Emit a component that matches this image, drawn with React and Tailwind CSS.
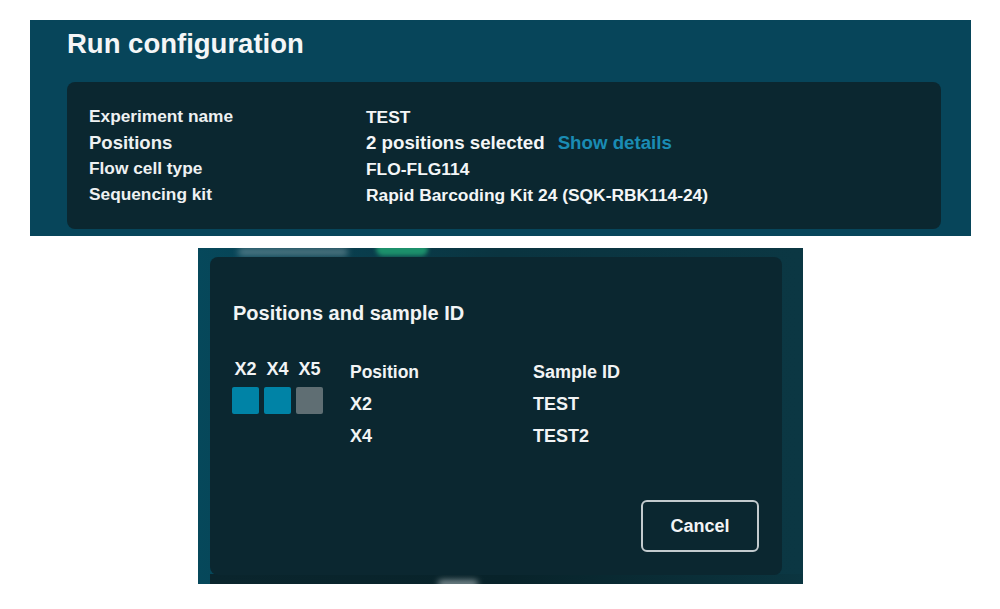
export default function App() {
  const font = { fontFamily: '"Liberation Sans", Arial, sans-serif' };
  const rows = [
    ["Experiment name", "TEST", false],
    ["Positions", "2 positions selected", true],
    ["Flow cell type", "FLO-FLG114", false],
    ["Sequencing kit", "Rapid Barcoding Kit 24 (SQK-RBK114-24)", false],
  ];
  return (
    <div className="w-[1000px] h-[609px] bg-white overflow-hidden" style={font}>
      <div className="pt-[20px] pl-[30px]">
        {/* Top panel */}
        <div className="w-[941px] h-[216px] bg-[#07455a] pt-[8px] pl-[37px] pr-[30px] flex flex-col">
          <h1 className="text-[27.5px] leading-[32px] font-bold text-[#f4f6f7]">Run configuration</h1>
          <div className="mt-[22px] h-[147px] bg-[#0b2730] rounded-[8px] pt-[22px] pl-[22px]">
            {rows.map(([label, value, big]) => (
              <div key={label} className="flex h-[26px] items-center">
                <div
                  className={
                    "w-[277px] font-bold text-[#eef1f2] " +
                    (big ? "text-[18.5px]" : "text-[17.3px]")
                  }
                >
                  {label}
                </div>
                <div className={"font-bold text-[#f4f6f7] flex items-center " + (big ? "text-[18.7px]" : "text-[17.4px]")}>
                  <span>{value}</span>
                  {big && <span className="ml-[13px] text-[#1a8cb4]">Show details</span>}
                </div>
              </div>
            ))}
          </div>
        </div>

        {/* Bottom panel */}
        <div className="mt-[12px] ml-[168px] w-[605px] h-[336px] relative overflow-hidden bg-gradient-to-r from-[#06485b] via-[#0a3440] to-[#0b3743] pt-[9px] pl-[12px]">
          <div className="absolute left-[40px] top-[0px] w-[110px] h-[8px] rounded-full bg-[#7d9aa3] blur-[3px] opacity-60"></div>
          <div className="absolute left-[178px] top-[-6px] w-[52px] h-[14px] rounded-full bg-[#1f9a6f] blur-[2px] opacity-90"></div>
          <div className="absolute left-[12px] bottom-[0px] w-[593px] h-[10px] bg-gradient-to-r from-[#0a252d] via-[#08232a] to-[#0b3540]"></div>
          <div className="absolute left-[240px] bottom-[-4px] w-[40px] h-[8px] rounded-full bg-[#c9d3d6] blur-[3px] opacity-60"></div>
          <div className="relative w-[572px] h-[318px] bg-[#0b2730] rounded-[8px] flex flex-col pl-[23px] pr-[23px] pt-[44px] pb-[23px]">
            <h2 className="text-[20px] leading-[24px] font-bold text-[#f2f4f5]">Positions and sample ID</h2>
            <div className="mt-[31px] flex items-start">
              <div className="mt-[3px] flex gap-[5px] -ml-[1px]">
                {[
                  ["X2", "bg-[#0083a6]"],
                  ["X4", "bg-[#0083a6]"],
                  ["X5", "bg-[#5f6e73]"],
                ].map(([l, c]) => (
                  <div key={l} className="flex flex-col items-center w-[27px]">
                    <div className="text-[18px] leading-[20px] font-bold text-[#f2f4f5]">{l}</div>
                    <div className={"mt-[8px] w-[27px] h-[27px] rounded-[2px] " + c}></div>
                  </div>
                ))}
              </div>
              <div className="ml-[27px] flex text-[#f2f4f5] font-bold">
                <div className="w-[183px]">
                  <div className="h-[32px] flex items-center text-[17.5px]">Position</div>
                  <div className="h-[32px] flex items-center text-[18px]">X2</div>
                  <div className="h-[32px] flex items-center text-[18px]">X4</div>
                </div>
                <div>
                  <div className="h-[32px] flex items-center text-[18px]">Sample ID</div>
                  <div className="h-[32px] flex items-center text-[18px]">TEST</div>
                  <div className="h-[32px] flex items-center text-[18px]">TEST2</div>
                </div>
              </div>
            </div>
            <div className="mt-auto flex justify-end">
              <button className="w-[118px] h-[52px] rounded-[6px] border-2 border-[#c3cbce] text-[18px] font-bold text-[#f2f4f5] bg-transparent">
                Cancel
              </button>
            </div>
          </div>
        </div>
      </div>
    </div>
  );
}
